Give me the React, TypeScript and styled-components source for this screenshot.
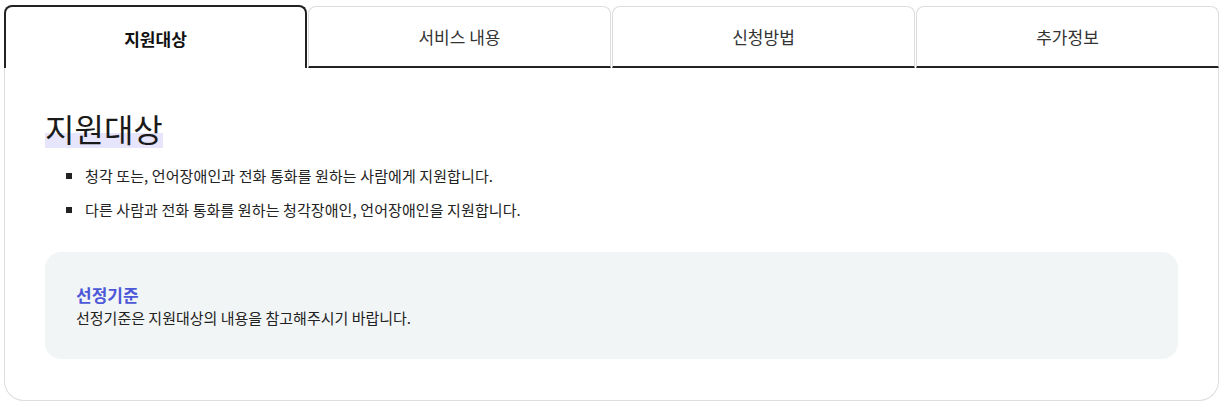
import React, { useState } from "react";
import styled, { createGlobalStyle } from "styled-components";

const Global = createGlobalStyle`
  html, body { margin: 0; padding: 0; background: #fff; }
  body {
    font-family: "Noto Sans CJK KR", "Noto Sans", sans-serif;
    color: #222;
  }
  * { box-sizing: border-box; }
`;

const Page = styled.div`
  padding: 5px 8px 7px 4px;
`;

const TabBar = styled.div`
  display: grid;
  grid-template-columns: repeat(4, 1fr);
  column-gap: 1px;
  height: 63px;
`;

const Tab = styled.button<{ $active: boolean }>`
  font-family: inherit;
  font-size: 17px;
  background: #fff;
  cursor: pointer;
  padding: 0;
  color: ${(p) => (p.$active ? "#111" : "#333")};
  font-weight: ${(p) => (p.$active ? 700 : 400)};
  border-radius: 8px 8px 0 0;
  border: ${(p) => (p.$active ? "2px solid #222" : "1px solid #ddd")};
  border-bottom: ${(p) => (p.$active ? "none" : "2px solid #222")};
  margin-top: ${(p) => (p.$active ? "0" : "1px")};
  padding-top: ${(p) => (p.$active ? "1px" : "0")};
`;

const Card = styled.section`
  border: 1px solid #ddd;
  border-top: none;
  border-radius: 0 0 20px 20px;
  padding: 40px 40px 41px 40px;
`;

const Heading = styled.h2`
  margin: 0;
  display: inline-block;
  font-size: 32px;
  font-weight: 400;
  line-height: 40px;
  height: 40px;
  color: #1a1a1a;
  background: linear-gradient(transparent 62%, #e7e5fb 62%, #e7e5fb 100%);
`;

const List = styled.ul`
  list-style: none;
  margin: 11px 0 0 0;
  padding: 0 0 0 21px;
`;

const Item = styled.li`
  display: flex;
  align-items: center;
  gap: 13px;
  font-size: 15px;
  line-height: 34px;
  letter-spacing: 0.1px;
  color: #222;
  &::before {
    content: "";
    width: 6px;
    height: 6px;
    background: #222;
    flex: none;
  }
`;

const InfoBox = styled.div`
  margin-top: 25px;
  background: #f2f5f6;
  border-radius: 16px;
  padding: 31px 31px 30px;
  min-height: 107px;
`;

const InfoTitle = styled.h3`
  margin: 0;
  font-size: 17px;
  font-weight: 700;
  line-height: 24px;
  color: #4d58d8;
`;

const InfoText = styled.p`
  margin: 0;
  font-size: 15px;
  line-height: 22px;
  color: #222;
`;

const tabs = ["지원대상", "서비스 내용", "신청방법", "추가정보"];

export default function App() {
  const [active, setActive] = useState(0);
  return (
    <>
      <Global />
      <Page>
        <TabBar>
          {tabs.map((t, i) => (
            <Tab key={t} $active={i === active} onClick={() => setActive(i)}>
              {t}
            </Tab>
          ))}
        </TabBar>
        <Card>
          <Heading>지원대상</Heading>
          <List>
            <Item>청각 또는, 언어장애인과 전화 통화를 원하는 사람에게 지원합니다.</Item>
            <Item>다른 사람과 전화 통화를 원하는 청각장애인, 언어장애인을 지원합니다.</Item>
          </List>
          <InfoBox>
            <InfoTitle>선정기준</InfoTitle>
            <InfoText>선정기준은 지원대상의 내용을 참고해주시기 바랍니다.</InfoText>
          </InfoBox>
        </Card>
      </Page>
    </>
  );
}
